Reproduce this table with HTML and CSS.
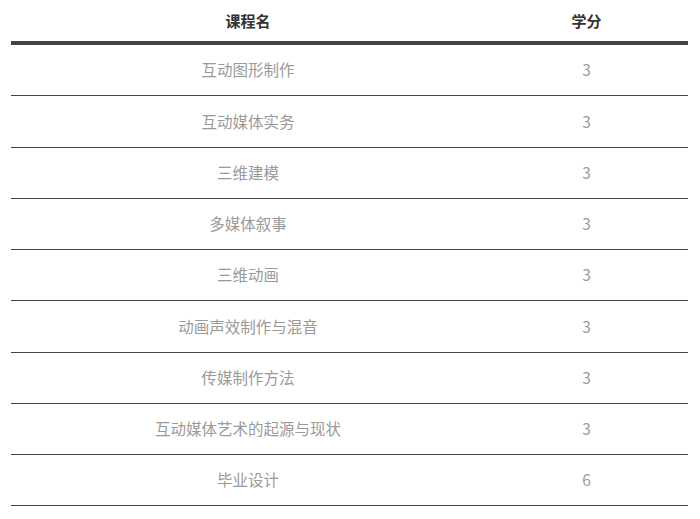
FILE: index.html
```html
<!DOCTYPE html>
<html lang="zh">
<head>
<meta charset="utf-8">
<link rel="stylesheet" href="styles.css">
</head>
<body>
<table class="courses">
  <thead>
    <tr><th class="c-name">课程名</th><th class="c-credit">学分</th></tr>
  </thead>
  <tbody>
    <tr><td>互动图形制作</td><td>3</td></tr>
    <tr><td>互动媒体实务</td><td>3</td></tr>
    <tr><td>三维建模</td><td>3</td></tr>
    <tr><td>多媒体叙事</td><td>3</td></tr>
    <tr><td>三维动画</td><td>3</td></tr>
    <tr><td>动画声效制作与混音</td><td>3</td></tr>
    <tr><td>传媒制作方法</td><td>3</td></tr>
    <tr><td>互动媒体艺术的起源与现状</td><td>3</td></tr>
    <tr><td>毕业设计</td><td>6</td></tr>
  </tbody>
</table>
</body>
</html>
```
FILE: styles.css
```css
html, body {
  margin: 0;
  padding: 0;
  background: #fff;
}
body {
  padding: 0 12px 0 11px;
  font-family: "Noto Sans CJK SC", "Noto Sans", sans-serif;
}
.courses {
  width: 677px;
  border-collapse: collapse;
  table-layout: fixed;
}
.courses th {
  height: 41px;
  padding: 0;
  font-size: 15px;
  font-weight: bold;
  color: #333;
  text-align: center;
  vertical-align: middle;
  border-bottom: 4px solid #444;
  line-height: 1;
}
.courses .c-name { width: 474px; }
.courses td {
  height: 50.25px;
  padding: 0;
  font-size: 15.5px;
  color: #9a9a9a;
  text-align: center;
  vertical-align: middle;
  border-bottom: 1px solid #444;
  line-height: 1;
}
```
